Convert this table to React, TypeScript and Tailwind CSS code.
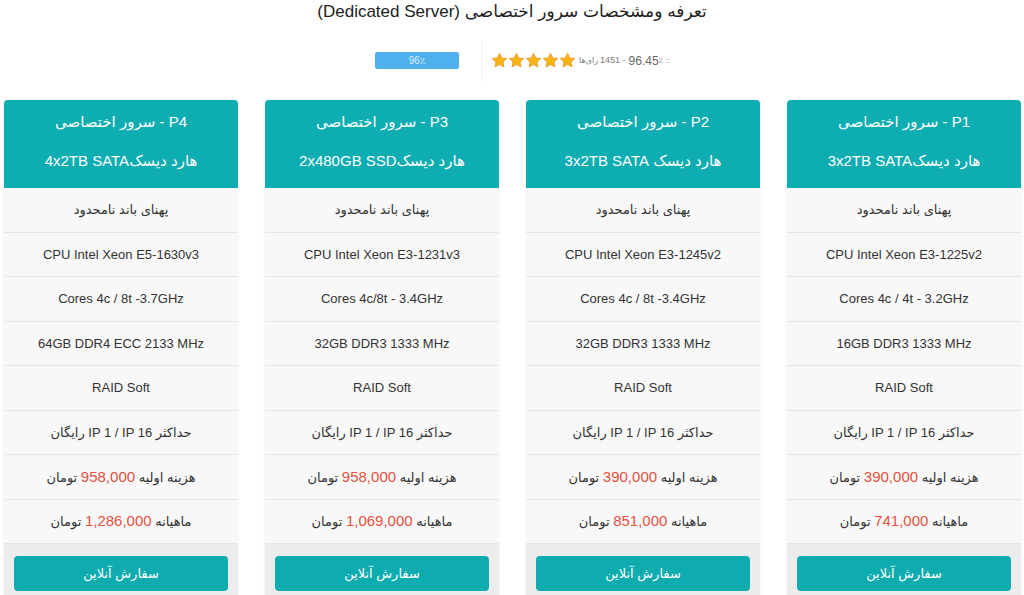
import React from 'react';

interface Plan {
  name: string;
  disk: string;
  cpu: string;
  cores: string;
  ram: string;
  setup: string;
  monthly: string;
}

const plans: Plan[] = [
  { name: 'P1', disk: '3x2TB SATA', cpu: 'CPU Intel Xeon E3-1225v2', cores: 'Cores 4c / 4t - 3.2GHz', ram: '16GB DDR3 1333 MHz', setup: '390,000', monthly: '741,000' },
  { name: 'P2', disk: ' 3x2TB SATA', cpu: 'CPU Intel Xeon E3-1245v2', cores: 'Cores 4c / 8t -3.4GHz', ram: '32GB DDR3 1333 MHz', setup: '390,000', monthly: '851,000' },
  { name: 'P3', disk: '2x480GB SSD', cpu: 'CPU Intel Xeon E3-1231v3', cores: 'Cores 4c/8t - 3.4GHz', ram: '32GB DDR3 1333 MHz', setup: '958,000', monthly: '1,069,000' },
  { name: 'P4', disk: '4x2TB SATA', cpu: 'CPU Intel Xeon E5-1630v3', cores: 'Cores 4c / 8t -3.7GHz', ram: '64GB DDR4 ECC 2133 MHz', setup: '958,000', monthly: '1,286,000' },
];

function Star() {
  return (
    <svg viewBox="0 0 24 24" className="w-[17px] h-[17px]">
      <path
        d="M12 1.8l3.1 6.5 7.1.9-5.2 4.9 1.3 7-6.3-3.4-6.3 3.4 1.3-7-5.2-4.9 7.1-.9z"
        fill="#f8b512"
        stroke="#e9962a"
        strokeWidth="1.2"
        strokeLinejoin="round"
      />
    </svg>
  );
}

function Row({ children }: { children: React.ReactNode }) {
  return (
    <div className="h-[44.5px] flex items-center justify-center border-b border-[#e6e6e6] text-[13px] text-[#333]">
      {children}
    </div>
  );
}

function PlanCard({ plan }: { plan: Plan }) {
  return (
    <div className="w-[234px] flex flex-col rounded-t-[4px] overflow-hidden shadow-[0_0_3px_rgba(0,0,0,0.08)] bg-[#f8f8f8]">
      {/* Header */}
      <div className="bg-[#0eadb1] text-white text-[15px] text-center pt-[2px] pb-[8px]">
        <div className="leading-[39px]">{plan.name} - سرور اختصاصی</div>
        <div className="leading-[39px]">هارد دیسک{plan.disk}</div>
      </div>

      <Row>پهنای باند نامحدود</Row>
      <Row><span dir="ltr">{plan.cpu}</span></Row>
      <Row><span dir="ltr">{plan.cores}</span></Row>
      <Row><span dir="ltr">{plan.ram}</span></Row>
      <Row><span dir="ltr">RAID Soft</span></Row>
      {/* visual order kept as in the original page */}
      <Row><span dir="ltr">رایگان IP 1 / IP 16 حداکثر</span></Row>
      <Row>
        <span>
          هزینه اولیه <span className="text-[#e4513f] text-[15px]">{plan.setup}</span> تومان
        </span>
      </Row>
      <Row>
        <span>
          ماهیانه <span className="text-[#e4513f] text-[15px]">{plan.monthly}</span> تومان
        </span>
      </Row>

      {/* Footer */}
      <div className="bg-[#ececec] px-[10px] pt-[12px] pb-[10px]">
        <button className="w-full h-[35px] rounded-[4px] bg-[#0eabaf] text-white text-[13px]">
          سفارش آنلاین
        </button>
      </div>
    </div>
  );
}

export default function App() {
  return (
    <div
      className="w-[1024px] h-[595px] overflow-hidden bg-white"
      style={{ fontFamily: '"Liberation Sans", "DejaVu Sans", sans-serif' }}
    >
      {/* Title */}
      <div dir="rtl" className="text-center text-[17px] leading-[24px] text-[#222]">
        تعرفه ومشخصات سرور اختصاصی (Dedicated Server)
      </div>

      {/* Rating */}
      <div className="mt-[16px] h-[41px] flex items-center justify-center">
        <div className="flex items-center pl-[375px] w-full">
          <div className="w-[84px] h-[17px] rounded-[2px] bg-[#4fb0ee] text-[#dff1fd] text-[10px] flex items-center justify-center">
            96٪
          </div>
          <div className="ml-[22px] w-px h-[41px] bg-[#f0f0f0]" />
          <div className="ml-[9px] flex items-center gap-0">
            <Star />
            <Star />
            <Star />
            <Star />
            <Star />
          </div>
          <div className="ml-[3px] flex items-center text-[#777]">
            <span className="text-[8px]">رای‌ها</span>
            <span dir="ltr" className="ml-[2px] text-[9px]">1451 -</span>
            <span dir="ltr" className="ml-[3px] text-[12px] text-[#666]">96.45</span>
            <span className="text-[8px]">٪ ::</span>
          </div>
        </div>
      </div>

      {/* Plans */}
      <div dir="rtl" className="mt-[19px] flex gap-[27px] pr-[3px] pl-[4px]">
        {plans.map((p) => (
          <PlanCard key={p.name} plan={p} />
        ))}
      </div>
    </div>
  );
}
